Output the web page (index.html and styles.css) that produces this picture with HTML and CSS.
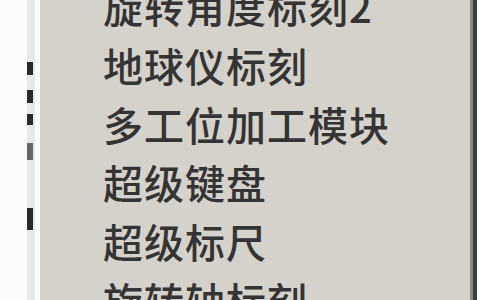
FILE: index.html
```html
<!DOCTYPE html>
<html lang="zh-CN">
<head>
    <meta charset="UTF-8">
    <meta name="viewport" content="width=device-width, initial-scale=1.0">
    <title>标刻菜单</title>
    <link rel="stylesheet" href="styles.css">
</head>
<body>
    <div class="screen">
        <div class="gutter"></div>
        <div class="marks">
            <span class="mark m1"></span>
            <span class="mark m2"></span>
            <span class="mark m3"></span>
            <span class="mark m4"></span>
            <span class="mark m5"></span>
        </div>
        <div class="menu">
            <ul class="items">
                <li>旋转角度标刻2</li>
                <li>地球仪标刻</li>
                <li>多工位加工模块</li>
                <li>超级键盘</li>
                <li>超级标尺</li>
                <li>旋转轴标刻</li>
            </ul>
        </div>
        <div class="outside"></div>
    </div>
</body>
</html>
```

FILE: styles.css
```css
body {
    margin: 0;
    background: #fff;
    overflow: hidden;
}
.screen {
    display: flex;
    height: 300px;
    overflow: hidden;
}
.gutter {
    width: 27px;
    background: #fbfbfb;
}
.marks {
    width: 8px;
    background: #e9e8e6;
    display: flex;
    flex-direction: column;
}
.mark {
    display: block;
    width: 6px;
    background: #2a2a2a;
}
.m1 { height: 13px; margin-top: 62px; }
.m2 { height: 13px; margin-top: 15px; }
.m3 { height: 11px; margin-top: 11px; }
.m4 { height: 17px; margin-top: 18px; background: #666; }
.m5 { height: 22px; margin-top: 48px; }
.menu {
    width: 430px;
    background: #d5d2cb;
    border-left: 5px solid #fdfdfd;
    border-right: 3px solid #8a8986;
    box-shadow: 4px 0 0 #3c3c3c;
    margin-right: 4px;
    overflow: hidden;
}
.items {
    list-style: none;
    margin: -23px 0 0;
    padding: 0 0 0 63px;
    font-family: "Noto Sans CJK SC", "Liberation Sans", sans-serif;
    font-size: 40px;
    font-weight: 500;
    line-height: 58.75px;
    letter-spacing: 1px;
    color: #343434;
    white-space: nowrap;
}
.outside {
    flex: 1;
    background: #fff;
}
```
